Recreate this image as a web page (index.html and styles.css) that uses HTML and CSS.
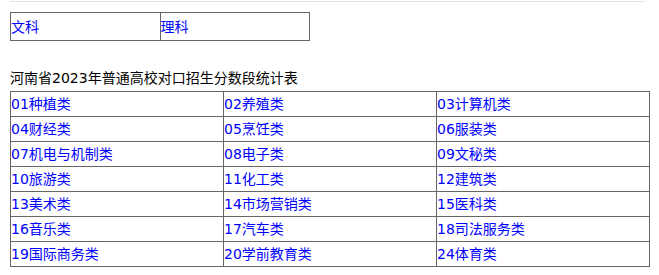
FILE: index.html
```html
<!DOCTYPE html>
<html lang="zh-CN">
<head>
<meta charset="utf-8">
<title>河南省2023年普通高校对口招生分数段统计表</title>
<link rel="stylesheet" href="styles.css">
</head>
<body>
<div class="page">
  <div class="rule"></div>
  <table class="tabs">
    <tr>
      <td><a href="#">文科</a></td>
      <td><a href="#">理科</a></td>
    </tr>
  </table>
  <div class="title">河南省2023年普通高校对口招生分数段统计表</div>
  <table class="grid">
    <tr><td><a href="#">01种植类</a></td><td><a href="#">02养殖类</a></td><td><a href="#">03计算机类</a></td></tr>
    <tr><td><a href="#">04财经类</a></td><td><a href="#">05烹饪类</a></td><td><a href="#">06服装类</a></td></tr>
    <tr><td><a href="#">07机电与机制类</a></td><td><a href="#">08电子类</a></td><td><a href="#">09文秘类</a></td></tr>
    <tr><td><a href="#">10旅游类</a></td><td><a href="#">11化工类</a></td><td><a href="#">12建筑类</a></td></tr>
    <tr><td><a href="#">13美术类</a></td><td><a href="#">14市场营销类</a></td><td><a href="#">15医科类</a></td></tr>
    <tr><td><a href="#">16音乐类</a></td><td><a href="#">17汽车类</a></td><td><a href="#">18司法服务类</a></td></tr>
    <tr><td><a href="#">19国际商务类</a></td><td><a href="#">20学前教育类</a></td><td><a href="#">24体育类</a></td></tr>
  </table>
</div>
</body>
</html>
```

FILE: styles.css
```css
html, body {
  margin: 0;
  padding: 0;
  background: #ffffff;
}

body {
  font-family: "DejaVu Sans", "Noto Sans CJK SC", sans-serif;
  font-size: 14px;
  color: #000000;
}

.page {
  padding: 1px 10px 0 10px;
}

.rule {
  width: 635px;
  height: 1px;
  background: #e3e3e3;
}

table {
  border-collapse: collapse;
  table-layout: fixed;
}

td {
  border: 1px solid #666666;
  padding: 0;
  vertical-align: middle;
  white-space: nowrap;
  line-height: 16px;
}

a {
  color: #0000ff;
  text-decoration: none;
}

.tabs {
  margin-top: 10px;
  width: 300px;
}

.tabs td {
  height: 27px;
}

.title {
  margin-top: 27px;
  line-height: 20px;
  height: 20px;
}

.grid {
  margin-top: 3px;
  width: 640px;
}

.grid td {
  height: 24px;
}
```
